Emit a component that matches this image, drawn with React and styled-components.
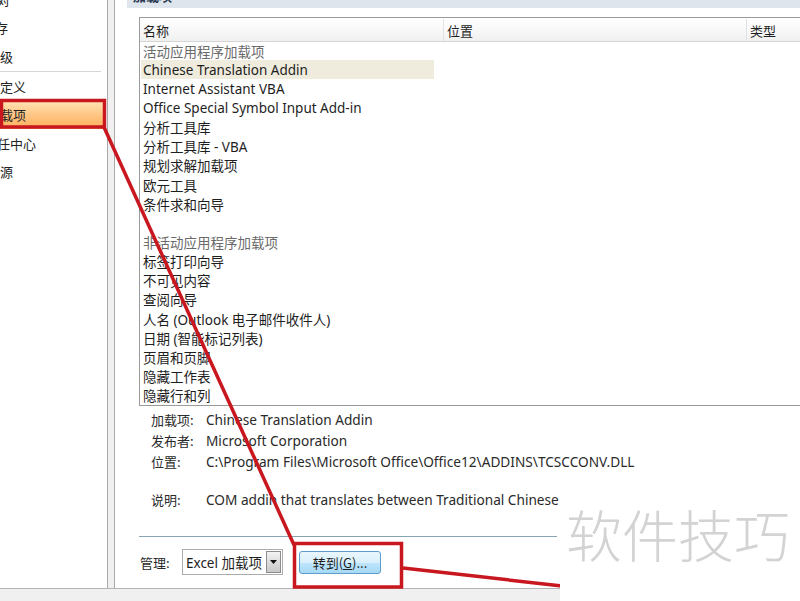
import React from "react";
import styled, { createGlobalStyle } from "styled-components";

const Global = createGlobalStyle`
  html, body { margin: 0; padding: 0; background: #ffffff; overflow: hidden; }
  body { font-family: "Noto Sans", "Noto Sans CJK SC", sans-serif; }
`;

const Page = styled.div`
  position: relative;
  width: 800px;
  height: 601px;
  overflow: hidden;
  background: #ffffff;
  display: flex;
  flex-direction: column;
  font-family: "Noto Sans", "Noto Sans CJK SC", sans-serif;
  font-size: 13px;
  color: #1e1e1e;
`;

const Main = styled.div`
  display: flex;
  height: 588px;
  flex: none;
`;

const Sidebar = styled.div`
  width: 108px;
  box-sizing: border-box;
  border-right: 1px solid #a9a9a9;
  background: #ffffff;
  overflow: hidden;
  display: flex;
  flex-direction: column;
`;

const NavItem = styled.div`
  height: 28.6px;
  flex: none;
  margin-right: 3px;
  display: flex;
  align-items: center;
  white-space: nowrap;
  font-family: "Noto Sans CJK SC", sans-serif;
  font-size: 13px;
  color: #222;
  background: ${(p) =>
    p.$active
      ? "linear-gradient(to bottom, #ffe7b8 0%, #ffc98a 45%, #ffae5a 100%)"
      : "transparent"};
  &:first-child { margin-top: -15px; }
`;

const NavText = styled.span`
  margin-left: ${(p) => p.$shift}px;
`;

const NavRule = styled.div`
  height: 1px;
  flex: none;
  margin: 0 6px 0 0;
  background: #d6d6d6;
`;

const Gutter = styled.div`
  width: 6px;
  flex: none;
  background: #f0f0f0;
`;

const Panel = styled.div`
  flex: 1;
  min-width: 0;
  border-left: 1px solid #a9a9a9;
  background: #ffffff;
  overflow: hidden;
  padding-left: 12px;
  display: flex;
  flex-direction: column;
`;

const SectionBand = styled.div`
  height: 26px;
  margin-top: -18px;
  background: #dfe5ec;
  flex: none;
  display: flex;
  align-items: center;
  padding-left: 6px;
  font-family: "Noto Sans CJK SC", sans-serif;
  font-weight: bold;
  font-size: 13px;
  color: #2a3a55;
`;

const ListBox = styled.div`
  margin-top: 9px;
  margin-left: 12px;
  width: 720px;
  height: 389px;
  box-sizing: border-box;
  border: 1px solid #9a9a9a;
  flex: none;
  display: flex;
  flex-direction: column;
`;

const HeaderRow = styled.div`
  height: 24px;
  flex: none;
  display: grid;
  grid-template-columns: 303px 303px 1fr;
  background: linear-gradient(to bottom, #ffffff 0%, #f7f7f7 60%, #f0f0f0 100%);
  border-bottom: 1px solid #d5d5d5;
  box-sizing: border-box;
  padding-top: 1px;
`;

const HeaderCell = styled.div`
  display: flex;
  align-items: center;
  padding-left: 3px;
  font-family: "Noto Sans CJK SC", sans-serif;
  font-size: 13px;
  color: #1e1e1e;
  border-left: ${(p) => (p.$divider ? "1px solid #e2e2e2" : "none")};
`;

const Rows = styled.div`
  display: flex;
  flex-direction: column;
  padding-left: 1px;
  margin-top: -1px;
`;

const Row = styled.div`
  height: 19.15px;
  width: 291px;
  display: flex;
  align-items: center;
  padding-left: 2px;
  white-space: nowrap;
  font-size: 13.5px;
  color: ${(p) => (p.$group ? "#6a6a6a" : "#1e1e1e")};
  background: ${(p) => (p.$selected ? "#efebdd" : "transparent")};
`;

const Details = styled.div`
  margin-top: 3px;
  padding-left: 24px;
  display: flex;
  flex-direction: column;
  flex: none;
`;

const DetailRow = styled.div`
  height: 21px;
  display: flex;
  align-items: center;
  white-space: nowrap;
  font-size: 13.65px;
  color: #2a2a2a;
  margin-top: ${(p) => (p.$gap ? "17px" : "0")};
`;

const DetailLabel = styled.span`
  width: 55px;
  flex: none;
  font-family: "Noto Sans CJK SC", sans-serif;
  font-size: 13px;
`;

const Rule = styled.div`
  margin-top: 26px;
  margin-left: 12px;
  width: 418px;
  height: 1px;
  flex: none;
  background: #8aa3b3;
`;

const ManageRow = styled.div`
  margin-top: 12px;
  margin-left: 13px;
  height: 26px;
  display: flex;
  align-items: center;
  flex: none;
`;

const ManageLabel = styled.span`
  width: 42px;
  font-family: "Noto Sans CJK SC", sans-serif;
  font-size: 13px;
  color: #2a2a2a;
`;

const Select = styled.div`
  width: 101px;
  height: 26px;
  box-sizing: border-box;
  border: 1px solid #acacac;
  display: flex;
  align-items: center;
  padding-left: 3px;
  padding-right: 1px;
  font-size: 13.5px;
  color: #1e1e1e;
  background: #fff;
`;

const SelectValue = styled.span`
  flex: 1;
  white-space: nowrap;
`;

const DropButton = styled.div`
  width: 15px;
  height: 22px;
  box-sizing: border-box;
  border: 1px solid #8c8c8c;
  background: linear-gradient(to bottom, #f4f4f4 0%, #dcdcdc 50%, #c9c9c9 100%);
  display: flex;
  align-items: center;
  justify-content: center;
`;

const GoButton = styled.div`
  margin-left: 16px;
  width: 82px;
  height: 23px;
  box-sizing: border-box;
  border: 1px solid #5d9ccc;
  border-radius: 3px;
  background: linear-gradient(to bottom, #eaf6fd 0%, #d9f0fc 50%, #bee6fd 51%, #a7d9f5 100%);
  display: flex;
  align-items: center;
  justify-content: center;
  font-family: "Noto Sans CJK SC", sans-serif;
  font-size: 13px;
  color: #1e1e1e;
`;

const StatusStrip = styled.div`
  flex: 1;
  background: #f0f0f0;
  border-top: 1px solid #b4b4b4;
`;

const Overlay = styled.svg`
  position: absolute;
  left: 0;
  top: 0;
  width: 800px;
  height: 601px;
  pointer-events: none;
`;

const Watermark = styled.div`
  position: absolute;
  left: 560px;
  top: 504px;
  width: 240px;
  height: 97px;
  background: #ffffff;
  display: flex;
  align-items: flex-start;
  padding-left: 6px;
  padding-top: 1px;
  box-sizing: border-box;
  font-family: "Noto Sans CJK SC", sans-serif;
  font-weight: 300;
  font-size: 56px;
  line-height: 1;
  color: #d3d3d3;
  white-space: nowrap;
`;

const navItems = [
  { text: "校对", shift: -16 },
  { text: "保存", shift: -18 },
  { text: "高级", shift: -13 },
  { rule: true },
  { text: "自定义", shift: -13 },
  { text: "加载项", shift: -13, active: true },
  { text: "信任中心", shift: -16 },
  { text: "资源", shift: -13 },
];

const rows = [
  { t: "活动应用程序加载项", group: true },
  { t: "Chinese Translation Addin", selected: true },
  { t: "Internet Assistant VBA" },
  { t: "Office Special Symbol Input Add-in" },
  { t: "分析工具库" },
  { t: "分析工具库 - VBA" },
  { t: "规划求解加载项" },
  { t: "欧元工具" },
  { t: "条件求和向导" },
  { t: "" },
  { t: "非活动应用程序加载项", group: true },
  { t: "标签打印向导" },
  { t: "不可见内容" },
  { t: "查阅向导" },
  { t: "人名 (Outlook 电子邮件收件人)" },
  { t: "日期 (智能标记列表)" },
  { t: "页眉和页脚" },
  { t: "隐藏工作表" },
  { t: "隐藏行和列" },
];

const details = [
  { l: "加载项:", v: "Chinese Translation Addin" },
  { l: "发布者:", v: "Microsoft Corporation" },
  { l: "位置:", v: "C:\\Program Files\\Microsoft Office\\Office12\\ADDINS\\TCSCCONV.DLL" },
  { l: "说明:", v: "COM addin that translates between Traditional Chinese", gap: true },
];

export default function App() {
  return (
    <>
      <Global />
      <Page>
        <Main>
          <Sidebar>
            {navItems.map((n, i) =>
              n.rule ? (
                <NavRule key={i} />
              ) : (
                <NavItem key={i} $active={n.active}>
                  <NavText $shift={n.shift}>{n.text}</NavText>
                </NavItem>
              )
            )}
          </Sidebar>
          <Gutter />
          <Panel>
            <SectionBand>加载项</SectionBand>
            <ListBox>
              <HeaderRow>
                <HeaderCell>名称</HeaderCell>
                <HeaderCell $divider>位置</HeaderCell>
                <HeaderCell $divider>类型</HeaderCell>
              </HeaderRow>
              <Rows>
                {rows.map((r, i) => (
                  <Row key={i} $group={r.group} $selected={r.selected}>
                    {r.t}
                  </Row>
                ))}
              </Rows>
            </ListBox>
            <Details>
              {details.map((d, i) => (
                <DetailRow key={i} $gap={d.gap}>
                  <DetailLabel>{d.l}</DetailLabel>
                  <span>{d.v}</span>
                </DetailRow>
              ))}
            </Details>
            <Rule />
            <ManageRow>
              <ManageLabel>管理:</ManageLabel>
              <Select>
                <SelectValue>Excel 加载项</SelectValue>
                <DropButton>
                  <svg width="7" height="4" viewBox="0 0 7 4">
                    <path d="M0 0 L7 0 L3.5 4 Z" fill="#111" />
                  </svg>
                </DropButton>
              </Select>
              <GoButton>
                转到(<u>G</u>)...
              </GoButton>
            </ManageRow>
          </Panel>
        </Main>
        <StatusStrip />
        <Overlay viewBox="0 0 800 601">
          <g fill="none" stroke="#c8171e" strokeWidth="3.5">
            <rect x="1.5" y="100.5" width="103" height="26.5" />
            <line x1="103" y1="125" x2="294" y2="545" />
            <rect x="294.5" y="543.5" width="107" height="43.5" />
            <line x1="403" y1="568" x2="562" y2="586" />
          </g>
        </Overlay>
        <Watermark>软件技巧</Watermark>
      </Page>
    </>
  );
}
